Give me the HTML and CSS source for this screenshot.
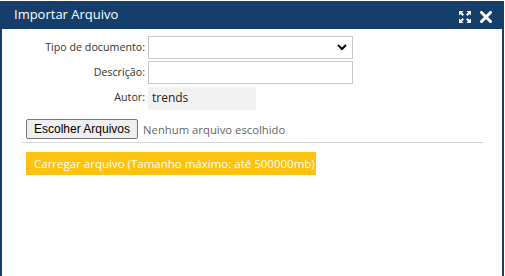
FILE: index.html
```html
<!DOCTYPE html>
<html>
<head>
<meta charset="utf-8">
<link rel="stylesheet" href="styles.css">
</head>
<body>
<div class="win">
  <div class="head">
    <span class="title">Importar Arquivo</span>
    <div class="tools">
      <svg class="ico" width="12" height="12" viewBox="0 0 12 12">
        <g fill="#fff">
          <path d="M0 0h4.5L3 1.5 5 3.5 3.5 5 1.5 3 0 4.5z"/>
          <path d="M12 0v4.5L10.5 3 8.5 5 7 3.5 9 1.5 7.5 0z"/>
          <path d="M0 12V7.5L1.5 9 3.5 7 5 8.5 3 10.5 4.5 12z"/>
          <path d="M12 12H7.5L9 10.5 7 8.5 8.5 7 10.5 9 12 7.5z"/>
        </g>
      </svg>
      <svg class="ico" width="12" height="12" viewBox="0 0 12 12">
        <path d="M1.5 1.5l9 9M10.5 1.5l-9 9" stroke="#fff" stroke-width="3" stroke-linecap="square"/>
      </svg>
    </div>
  </div>
  <div class="body">
    <div class="form">
      <div class="row">
        <label class="lbl">Tipo de documento:</label>
        <div class="select"><svg width="10" height="8" viewBox="0 0 10 8"><path d="M1 2l4 4 4-4" fill="none" stroke="#000" stroke-width="2"/></svg></div>
      </div>
      <div class="row">
        <label class="lbl">Descrição:</label>
        <div class="input"></div>
      </div>
      <div class="row">
        <label class="lbl">Autor:</label>
        <div class="ro">trends</div>
      </div>
    </div>
    <div class="file">
      <span class="btn">Escolher Arquivos</span>
      <span class="none">Nenhum arquivo escolhido</span>
    </div>
    <div class="sep"></div>
    <div class="upload">Carregar arquivo (Tamanho máximo: até 500000mb)</div>
  </div>
</div>
</body>
</html>
```
FILE: styles.css
```css
html, body { margin: 0; padding: 0; background: #fff; }
body { width: 505px; height: 276px; overflow: hidden; font-family: "Open Sans", "Noto Sans", sans-serif; }
.win {
  box-sizing: border-box;
  width: 504px;
  height: 276px;
  margin-top: 1px;
  background: #153f6a;
  padding: 0 2px 0 2px;
  display: flex;
  flex-direction: column;
}
.head {
  height: 28px;
  display: flex;
  align-items: center;
  justify-content: space-between;
  padding: 0 10px 0 12px;
}
.title { color: #fff; font-size: 13px; margin-top: -3px; }
.tools { display: flex; gap: 9px; align-items: center; margin-top: 4px; }
.ico { display: block; }
.body { flex: 1; background: #fff; padding-top: 7px; }
.form { display: flex; flex-direction: column; gap: 2px; }
.row { display: flex; align-items: center; height: 22px; }
.row + .row { margin-top: 1px; }
.lbl { width: 143px; text-align: right; font-size: 10.7px; color: #333; padding-right: 3px; white-space: nowrap; }
.select, .input {
  box-sizing: border-box;
  width: 205px;
  height: 23px;
  border: 1px solid #c8c8c8;
  background: #fff;
}
.select { display: flex; align-items: center; justify-content: flex-end; padding-right: 5px; }
.ro {
  height: 23px;
  margin-top: 2px;
  background: #f2f2f2;
  font-size: 12px;
  color: #222;
  padding-left: 4px;
  line-height: 21px;
  width: 104px;
}
.file { display: flex; align-items: center; margin: 11px 0 0 24px; gap: 5px; }
.btn {
  box-sizing: border-box;
  height: 20px;
  padding: 0 7px;
  border: 1px solid #767676;
  border-radius: 2px;
  background: #efefef;
  font-family: "Liberation Sans", Arial, sans-serif;
  font-size: 12px;
  line-height: 18px;
  color: #000;
  white-space: nowrap;
}
.none { font-size: 11.3px; color: #666; white-space: nowrap; }
.sep { height: 1px; background: #d4d4d4; margin: 3px 19px 0 20px; }
.upload {
  margin: 9px 0 0 24px;
  width: 290px;
  height: 23px;
  background: #ffc20e;
  color: #fff;
  font-size: 11.5px;
  line-height: 23px;
  padding-left: 8px;
  box-sizing: border-box;
  white-space: nowrap;
}
```
